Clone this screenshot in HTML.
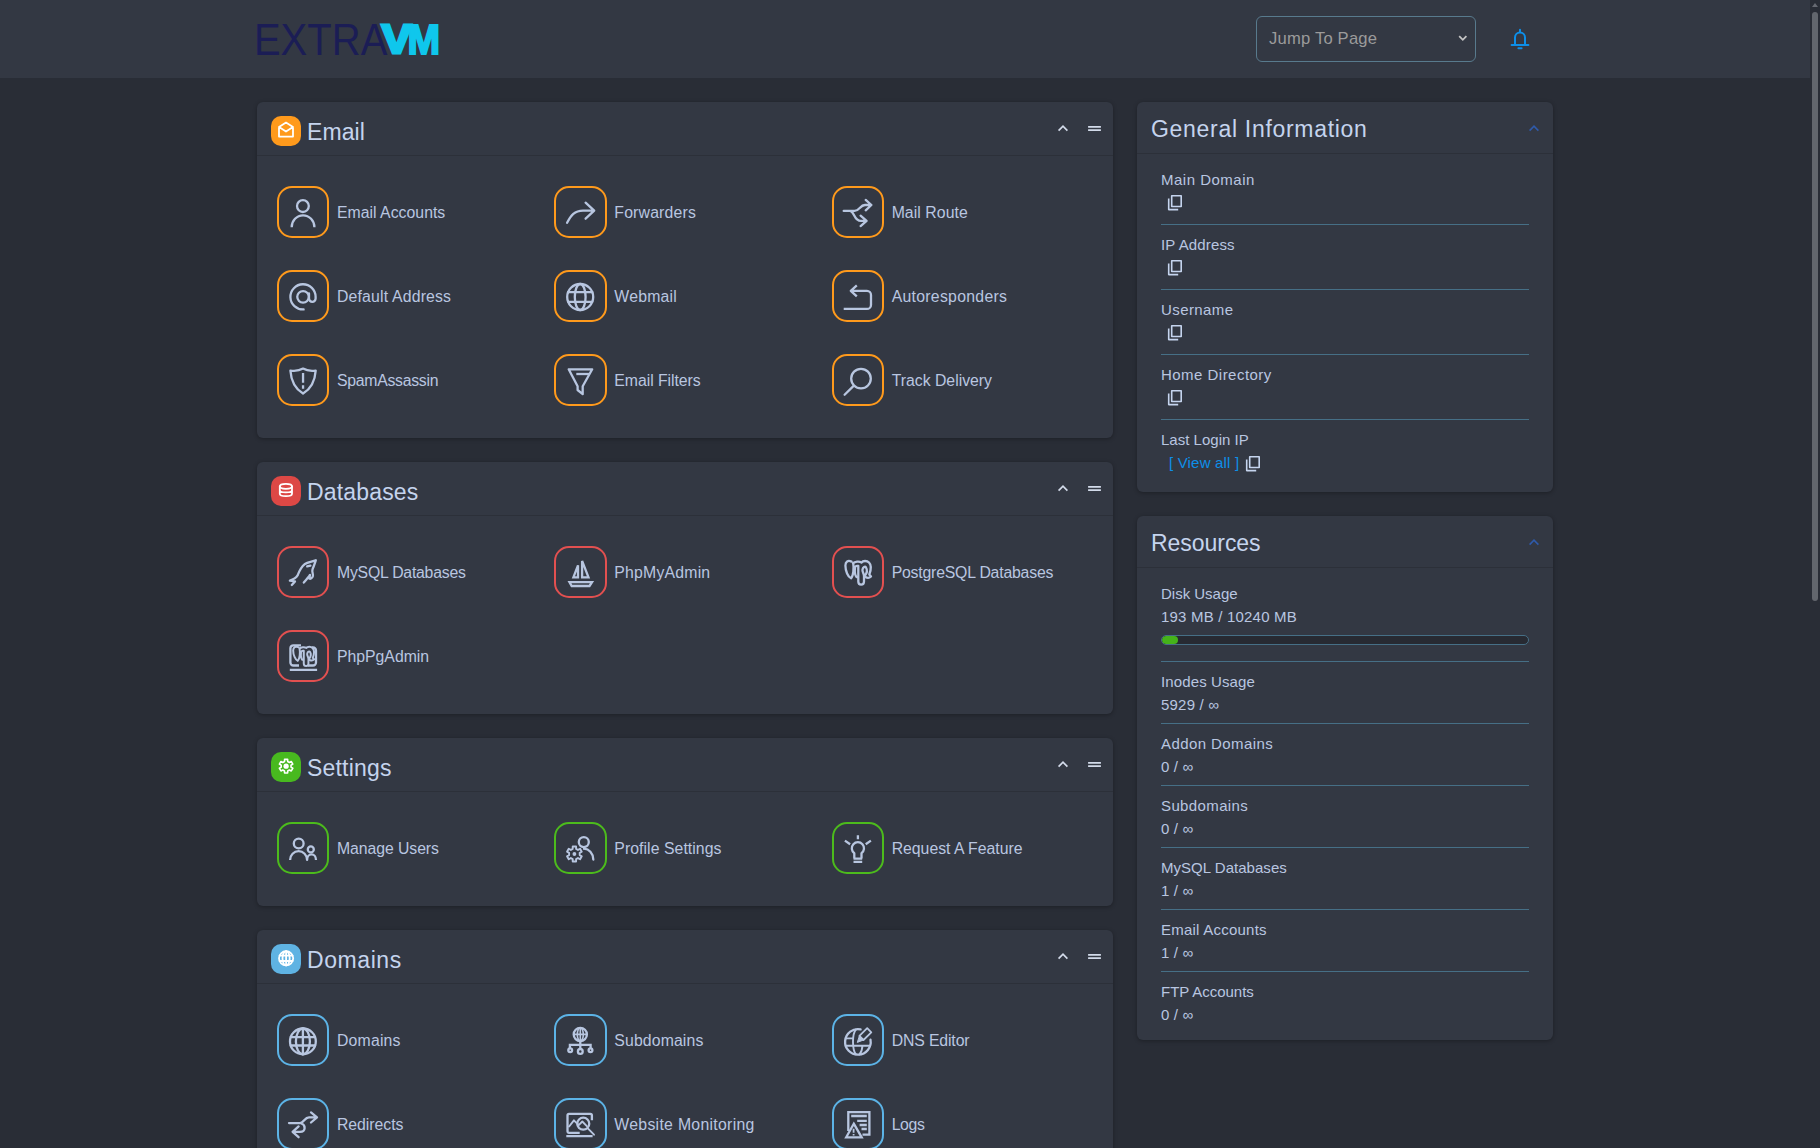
<!DOCTYPE html>
<html lang="en">
<head>
<meta charset="utf-8">
<title>ExtraVM</title>
<style>
*{box-sizing:border-box}
html,body{margin:0;padding:0}
html{overflow:hidden;background:#292d36}
body{width:1820px;height:1148px;overflow:hidden;background:#292d36;font-family:"Liberation Sans",sans-serif;color:#b9c6e0;position:relative}
svg{display:block;overflow:visible}
.top{position:absolute;left:0;top:0;width:1810px;height:78px;background:#333843}
.logo{position:absolute;left:254px;top:14px}
.jump{position:absolute;left:1256px;top:16px;width:220px;height:46px;border:1px solid #587a8d;border-radius:6px;color:#9b9b9b;font-size:16.6px;line-height:44px;padding-left:12px;white-space:nowrap}
.jump svg{position:absolute;left:201px;top:18px}
.bell{position:absolute;left:1510px;top:28px}
.sbar{position:absolute;left:1810px;top:0;width:10px;height:1148px;background:#292d36}
.sbar i{position:absolute;left:2px;top:12px;width:6px;height:588.7px;border-radius:3px;background:#62666d}
.sbar b{position:absolute;left:2px;top:2.8px;width:0;height:0;border-left:3px solid transparent;border-right:3px solid transparent;border-bottom:4.2px solid #666a72}
.card{position:absolute;background:#333843;border-radius:6px;box-shadow:0 1px 4px rgba(0,0,0,.3)}
.main{left:257px;width:856px}
.side{left:1137px;width:416px}
.hd{position:relative;height:54px;border-bottom:1px solid #2c3039}
.side .hd{height:52px}
.badge{position:absolute;left:14px;top:14px;width:30px;height:30px;border-radius:10px}
.badge svg{fill:none;stroke:#fff;stroke-width:1.8;stroke-linecap:round;stroke-linejoin:round}
.hd h2{position:absolute;left:50px;top:0;margin:0;font-weight:400;font-size:23px;line-height:60.1px;color:#c5d4ee;white-space:nowrap}
.side .hd h2{left:14px;line-height:55.9px}
.chev,.bars,.schev{position:absolute;fill:none;stroke:#d3dbea;stroke-width:1.7}
.chev{left:800px;top:22px}
.bars{left:830px;top:22px}
.schev{left:391px;top:22.3px;stroke:#2f5aaa;stroke-width:1.6}
.grid{padding:14px 12px 15px;display:flex;flex-wrap:wrap}
.it span{position:relative;top:.5px}
.it{width:277.33px;height:84px;display:flex;align-items:center;padding-left:8px;font-size:15.8px;white-space:nowrap}
.ib{width:52.4px;height:52.4px;border:2px solid #f90;border-radius:15px;margin-right:7.6px;flex:none;position:relative}
.ib svg{position:absolute;left:-1.9px;top:-1.8px;fill:none;stroke:#b8c6e0;stroke-width:2.3;stroke-linecap:round;stroke-linejoin:round}
.em .ib{border-color:#ff9a1c}
.db .ib{border-color:#e25050}
.st .ib{border-color:#4cbb1c}
.dm .ib{border-color:#5cb3e6}
.sb{padding:6px 24px 0}
.row{position:relative;font-size:15px;white-space:nowrap;border-bottom:1px solid #466f86}
.row.last{border-bottom:0}
.inf{height:65px}
.rs{height:62px}
.rs.disk{height:88px}
.lb{position:absolute;left:0;top:10.7px;line-height:18px}
.vl{position:absolute;left:0;top:33.8px;line-height:18px}
.inf .vl{left:6px;top:34.2px;display:flex;align-items:center}
.inf a{color:#0d8fe8;margin:0 6px 0 2px;position:relative;top:-.6px}
.copy{fill:none;stroke:#c5d4ee;stroke-width:1.6}
.pbar{position:absolute;left:0;top:61px;width:368px;height:10px;border:1px solid #466f86;border-radius:5px;background:#272a32;overflow:hidden}
.pbar i{display:block;width:16px;height:8px;border-radius:4px;background:#45b31a}
</style>
</head>
<body>
<div class="top">
 <svg class="logo" width="190" height="50" viewBox="0 0 190 50"><text font-family="Liberation Sans, sans-serif"><tspan x="-0.1" y="40.7" font-size="44.7" fill="#1b1d55" textLength="133.5" lengthAdjust="spacingAndGlyphs">EXTRA</tspan><tspan x="127.8" y="39.4" font-weight="700" fill="#0fc7ec" stroke="#0fc7ec" font-size="40.5" stroke-width="3" textLength="29.6" lengthAdjust="spacingAndGlyphs">V</tspan><tspan x="153.6" y="39.9" font-weight="700" fill="#0fc7ec" stroke="#0fc7ec" font-size="41.9" stroke-width="2" textLength="32.6" lengthAdjust="spacingAndGlyphs">M</tspan></text></svg>
 <div class="jump" style="letter-spacing:0.20px">Jump To Page<svg width="10" height="8" viewBox="0 0 10 8"><path d="M1.2 1.2l3.6 3.6 3.6-3.6" fill="none" stroke="#c4c4c4" stroke-width="1.8"/></svg></div>
 <svg class="bell" width="20" height="22" viewBox="0 0 20 22"><path d="M1.6 17.1h16.8M5 17.1V9.4a5 5 0 0 1 10 0V17.1M10 1.7V4.4M8.4 20.2h3.2" fill="none" stroke="#0d8fe8" stroke-width="2" stroke-linecap="round"/></svg>
</div>
<div class="sbar"><b></b><i></i></div>
<div class="card main em" style="top:102px;height:336px">
 <div class="hd"><div class="badge" style="background:#ff9a1c"><svg width="30" height="30" viewBox="0 0 30 30"><path d="M8 11L15 6.6L22 11V20.6H8ZM8 11L15 15.6L22 11" /></svg></div><h2 style="letter-spacing:0.11px">Email</h2><svg class="chev" width="12" height="8" viewBox="0 0 12 8"><path d="M1.6 6.6L6 2.2L10.4 6.6"/></svg><svg class="bars" width="14" height="8" viewBox="0 0 14 8"><path d="M1.1 2.9H13.9M1.1 6.2H13.9"/></svg></div>
 <div class="grid">
  <div class="it"><div class="ib"><svg width="52" height="52" viewBox="0 0 52 52"><circle cx="25.9" cy="20.1" r="5.9"/><path d="M14.7 41.2A11.35 11.9 0 0 1 37.4 41.2" stroke-linecap="butt"/></svg></div><span style="letter-spacing:0.02px">Email Accounts</span></div>
  <div class="it"><div class="ib"><svg width="52" height="52" viewBox="0 0 52 52"><path d="M13.1 36.8C17 29.5 20.5 24.6 29 24.6H40.2M31.6 16.7L40.2 24.6L31.6 32.7"/></svg></div><span style="letter-spacing:0.18px">Forwarders</span></div>
  <div class="it"><div class="ib"><svg width="52" height="52" viewBox="0 0 52 52"><path d="M11.7 24.9H22.5C27.5 24.9 28 19 33 19H39.3M33.7 13.9L39.4 19L33.7 24.3M18.8 25.1C23 27 22 34.9 29 34.9H34.5M28.6 29.7L34.6 34.9L28.6 40.1"/></svg></div><span style="letter-spacing:0.07px">Mail Route</span></div>
  <div class="it"><div class="ib"><svg width="52" height="52" viewBox="0 0 52 52"><circle cx="26.05" cy="26.85" r="5.8"/><path d="M32 23.5V28.6a3.3 3.3 0 0 0 6.6 0V26.85A12.6 12.6 0 1 0 26.6 39.45"/></svg></div><span style="letter-spacing:0.18px">Default Address</span></div>
  <div class="it"><div class="ib"><svg width="52" height="52" viewBox="0 0 52 52"><circle cx="26.2" cy="27" r="13"/><ellipse cx="26.2" cy="27" rx="5.4" ry="13"/><path d="M14.1 22.1H38.3M14.1 31.8H38.3"/></svg></div><span style="letter-spacing:0.21px">Webmail</span></div>
  <div class="it"><div class="ib"><svg width="52" height="52" viewBox="0 0 52 52"><path d="M11.7 38.9H35a4 4 0 0 0 4-4V24.9a4 4 0 0 0-4-4H18.9M24.8 15.4L18.8 20.9L24.8 26.4" stroke-linecap="butt"/></svg></div><span style="letter-spacing:0.29px">Autoresponders</span></div>
  <div class="it"><div class="ib"><svg width="52" height="52" viewBox="0 0 52 52"><path d="M13.4 16.6Q21 17.6 26.05 14.6Q31.1 17.6 38.7 16.6C38 27 33.5 35 26.05 39.6C18.6 35 14.1 27 13.4 16.6Z"/><path d="M26.05 19V28.7M26.05 31.2V34.7" stroke-linecap="butt"/></svg></div><span style="letter-spacing:-0.27px">SpamAssassin</span></div>
  <div class="it"><div class="ib"><svg width="52" height="52" viewBox="0 0 52 52"><path d="M14.7 15.3H38.2L28.7 32.3V40.2L23.6 36V32.3Z"/><path d="M22.3 20H35" stroke-linecap="butt"/></svg></div><span style="letter-spacing:-0.04px">Email Filters</span></div>
  <div class="it"><div class="ib"><svg width="52" height="52" viewBox="0 0 52 52"><circle cx="29" cy="24.6" r="9.8"/><path d="M21.6 31.9L12.6 40.7"/></svg></div><span style="letter-spacing:0.00px">Track Delivery</span></div>
 </div>
</div>
<div class="card main db" style="top:462px;height:252px">
 <div class="hd"><div class="badge" style="background:#dd4845"><svg width="30" height="30" viewBox="0 0 30 30"><ellipse cx="14.9" cy="10.3" rx="6.1" ry="2.5"/><path d="M8.8 10.3V17.8C8.8 21 21 21 21 17.8V10.3M8.8 14C8.8 17.2 21 17.2 21 14"/></svg></div><h2 style="letter-spacing:0.16px">Databases</h2><svg class="chev" width="12" height="8" viewBox="0 0 12 8"><path d="M1.6 6.6L6 2.2L10.4 6.6"/></svg><svg class="bars" width="14" height="8" viewBox="0 0 14 8"><path d="M1.1 2.9H13.9M1.1 6.2H13.9"/></svg></div>
 <div class="grid">
  <div class="it"><div class="ib"><svg width="52" height="52" viewBox="0 0 52 52"><path d="M12.9 34.6C16 33.6 19 32 20.6 29.4C22 26 23.5 21.5 27.5 18.3C31 16 35.5 15.8 38.8 14.3C38 17.5 36.5 20.5 35.5 23.5C34.5 26.5 36.8 28.5 35.8 30.5C35 32 33.5 33.2 32.4 32.6L33 28.8C31.5 31 29 34 26.8 36.6M12.9 34.6L18 35.4L14.8 39M30.2 20.4L33.4 19.6"/></svg></div><span style="letter-spacing:-0.22px">MySQL Databases</span></div>
  <div class="it"><div class="ib"><svg width="52" height="52" viewBox="0 0 52 52"><path d="M15.5 36.2H38L35.5 40H17.7ZM28.1 14.9L34.5 31.3H28.1ZM24 19.3V31.3H19.4Z" stroke-linejoin="miter"/></svg></div><span style="letter-spacing:0.21px">PhpMyAdmin</span></div>
  <div class="it"><div class="ib"><svg width="52" height="52" viewBox="0 0 52 52"><path d="M19.5 15.6C16 14 13.4 15.5 13.4 19.5C13.4 25 16 31 19 32.3C21.5 30 22 22 21.2 17M21 17.5C23 15.5 27 15 29.5 16.5C31 14.5 35 14.5 37 16.5C39.5 19 39 24 37.3 28.5L39 30.5C37.5 32 35 32 33.5 31M26.3 20V35.5C26.3 39.6 32 39.6 32 35.5V30C32 27 30 26 30.5 23.5C31 21 33 20 34 21.5C35.5 24 34.5 27.5 33 29.5M26.3 20C25 19.5 23.5 20 23 21.5C22.5 26 22.8 29 24.5 31"/></svg></div><span style="letter-spacing:-0.19px">PostgreSQL Databases</span></div>
  <div class="it"><div class="ib"><svg width="52" height="52" viewBox="0 0 52 52"><path d="M24 15.3H16.4a3 3 0 0 0-3 3V32.5a3 3 0 0 0 3 3H22M35 17.5h1a3 3 0 0 1 3 3V32.5a3 3 0 0 1-3 3H31M12.8 39.9H40.1" stroke-linecap="butt"/><g transform="translate(5.2 4.4) scale(.82)" stroke-width="2.4"><path d="M19.5 15.6C16 14 13.4 15.5 13.4 19.5C13.4 25 16 31 19 32.3C21.5 30 22 22 21.2 17M21 17.5C23 15.5 27 15 29.5 16.5C31 14.5 35 14.5 37 16.5C39.5 19 39 24 37.3 28.5L39 30.5C37.5 32 35 32 33.5 31M26.3 20V35.5C26.3 39.6 32 39.6 32 35.5V30C32 27 30 26 30.5 23.5C31 21 33 20 34 21.5C35.5 24 34.5 27.5 33 29.5M26.3 20C25 19.5 23.5 20 23 21.5C22.5 26 22.8 29 24.5 31"/></g></svg></div><span style="letter-spacing:-0.01px">PhpPgAdmin</span></div>
 </div>
</div>
<div class="card main st" style="top:738px;height:168px">
 <div class="hd"><div class="badge" style="background:#48b91f"><svg width="30" height="30" viewBox="0 0 30 30"><path d="M13.51 9.46 L13.57 7.37 L16.63 7.37 L16.69 9.46 L18.41 10.45 L20.25 9.46 L21.78 12.11 L20.00 13.21 L20.00 15.19 L21.78 16.29 L20.25 18.94 L18.41 17.95 L16.69 18.94 L16.63 21.03 L13.57 21.03 L13.51 18.94 L11.79 17.95 L9.95 18.94 L8.42 16.29 L10.20 15.19 L10.20 13.21 L8.42 12.11 L9.95 9.46 L11.79 10.45Z" stroke-width="1.6"/><circle cx="15.1" cy="14.2" r="2.6" fill="#fff" stroke="none"/></svg></div><h2 style="letter-spacing:0.20px">Settings</h2><svg class="chev" width="12" height="8" viewBox="0 0 12 8"><path d="M1.6 6.6L6 2.2L10.4 6.6"/></svg><svg class="bars" width="14" height="8" viewBox="0 0 14 8"><path d="M1.1 2.9H13.9M1.1 6.2H13.9"/></svg></div>
 <div class="grid">
  <div class="it"><div class="ib"><svg width="52" height="52" viewBox="0 0 52 52"><circle cx="21.7" cy="21.5" r="4.9"/><circle cx="33.8" cy="27.4" r="3" stroke-width="2.3"/><path d="M13.1 37.9A8.5 8.7 0 0 1 30.1 37.9A4.45 5.6 0 0 1 39 37.9" stroke-linecap="butt"/></svg></div><span style="letter-spacing:-0.07px">Manage Users</span></div>
  <div class="it"><div class="ib"><svg width="52" height="52" viewBox="0 0 52 52"><circle cx="29.8" cy="20.1" r="5"/><path d="M30 26.7C35 27 39 31 39.3 37.5"/><path d="M18.68 26.88 L18.72 24.49 L22.08 24.49 L22.12 26.88 L23.97 27.95 L26.07 26.79 L27.75 29.70 L25.69 30.93 L25.69 33.07 L27.75 34.30 L26.07 37.21 L23.97 36.05 L22.12 37.12 L22.08 39.51 L18.72 39.51 L18.68 37.12 L16.83 36.05 L14.73 37.21 L13.05 34.30 L15.11 33.07 L15.11 30.93 L13.05 29.70 L14.73 26.79 L16.83 27.95Z" stroke-width="1.9"/><circle cx="20.4" cy="32" r="1.9" fill="#b8c6e0" stroke="none"/></svg></div><span style="letter-spacing:0.06px">Profile Settings</span></div>
  <div class="it"><div class="ib"><svg width="52" height="52" viewBox="0 0 52 52"><path d="M22.3 36.5V31.2A6.1 6.1 0 1 1 29.5 31.2V36.5M21.5 36.7H30.2M21.5 39.8H30.2M25.9 13.2V17.3M12.9 18.6L18.1 22.2M38.9 18.6L33.7 22.2" stroke-linecap="butt"/></svg></div><span style="letter-spacing:-0.00px">Request A Feature</span></div>
 </div>
</div>
<div class="card main dm" style="top:930px;height:260px">
 <div class="hd"><div class="badge" style="background:#5fb3e3"><svg width="30" height="30" viewBox="0 0 30 30"><circle cx="15.1" cy="14.3" r="7.1"/><ellipse cx="15.1" cy="14.3" rx="3.6" ry="7.1"/><path d="M15.1 7.2V21.4M8.6 11.6H21.6M8.6 17H21.6"/></svg></div><h2 style="letter-spacing:0.58px">Domains</h2><svg class="chev" width="12" height="8" viewBox="0 0 12 8"><path d="M1.6 6.6L6 2.2L10.4 6.6"/></svg><svg class="bars" width="14" height="8" viewBox="0 0 14 8"><path d="M1.1 2.9H13.9M1.1 6.2H13.9"/></svg></div>
 <div class="grid">
  <div class="it"><div class="ib"><svg width="52" height="52" viewBox="0 0 52 52"><circle cx="25.9" cy="27.4" r="12.9"/><ellipse cx="25.9" cy="27.4" rx="7" ry="12.9"/><path d="M25.9 14.5V40.3M13.7 23.1H38.1M13.7 31.5H38.1"/></svg></div><span style="letter-spacing:0.19px">Domains</span></div>
  <div class="it"><div class="ib"><svg width="52" height="52" viewBox="0 0 52 52"><circle cx="26.3" cy="20.4" r="6.6"/><ellipse cx="26.3" cy="20.4" rx="3" ry="6.6" stroke-width="1.6"/><path d="M26.3 13.8V27M19.7 20.4H32.9" stroke-width="1.6"/><path d="M26.3 27V34.6M15.9 34V30.9H36.6V34" stroke-linecap="butt" stroke-linejoin="miter"/><circle cx="16.2" cy="36.3" r="1.9"/><circle cx="36.5" cy="36.3" r="1.9"/><circle cx="26.3" cy="37.4" r="2.4"/></svg></div><span style="letter-spacing:0.13px">Subdomains</span></div>
  <div class="it"><div class="ib"><svg width="52" height="52" viewBox="0 0 52 52"><path d="M38.5 25.7A12.8 12.8 0 1 1 28.6 15.4"/><path d="M24 15.4C20 20 20 36 24 40.4M27.5 40.4C29.5 38 30.3 35 30.4 31.7M13.6 31.7H38.2M13.8 24.4H20.8" stroke-width="1.9"/><path d="M35.2 14.2L39.3 18.3L31.5 26L27.4 21.9Z" stroke-width="1.8"/><path d="M27.4 21.9L25.3 28.4L31.5 26Z" fill="#b8c6e0" stroke-width="1"/></svg></div><span style="letter-spacing:-0.12px">DNS Editor</span></div>
  <div class="it"><div class="ib"><svg width="52" height="52" viewBox="0 0 52 52"><path d="M12 25.1H23C27 25.1 27.5 19.3 32 19.3H39.8M34 14.4L40 19.3L34 24.5M24.5 25.5C28.6 27 29.2 33.8 23 33.8H15.8M21.6 28.4L15.6 33.8L21.6 39.2"/></svg></div><span style="letter-spacing:-0.04px">Redirects</span></div>
  <div class="it"><div class="ib"><svg width="52" height="52" viewBox="0 0 52 52"><path d="M25.7 34.8H15a1.5 1.5 0 0 1-1.5-1.5V17.4a1.5 1.5 0 0 1 1.5-1.5H36.4a1.5 1.5 0 0 1 1.5 1.5V22.3M12.3 38.1H38.6" stroke-linecap="butt"/><circle cx="29.25" cy="25.7" r="6"/><path d="M33.6 30.1L40 36.7M15.1 28.5L19.9 22.3L24.7 27.1L28.3 23.5L32.8 28.1" stroke-width="1.9"/></svg></div><span style="letter-spacing:0.30px">Website Monitoring</span></div>
  <div class="it"><div class="ib"><svg width="52" height="52" viewBox="0 0 52 52"><path d="M16.3 33V14.2H37.4V36.7H30.5" stroke-linejoin="miter" stroke-linecap="butt"/><path d="M19.2 18H34.8M25.2 22.8H34.8M27.6 27H34.8M29.5 31H34.8" stroke-linecap="butt"/><path d="M21.8 25.7L29.7 39.3H14.2Z" stroke-linejoin="miter"/><path d="M21.6 30.7V34.8M21.6 36V37.6" stroke-linecap="butt" stroke-width="1.8"/></svg></div><span style="letter-spacing:-0.34px">Logs</span></div>
 </div>
</div>
<div class="card side" style="top:102px;height:390px">
 <div class="hd"><h2 style="letter-spacing:0.70px">General Information</h2><svg class="schev" width="12" height="8" viewBox="0 0 12 8"><path d="M1.6 6.6L6 2.2L10.4 6.6"/></svg></div>
 <div class="sb">
  <div class="row inf"><div class="lb" style="letter-spacing:0.50px">Main Domain</div><div class="vl"><svg class="copy" width="16" height="17" viewBox="0 0 16 17"><path d="M4.7 12.5V1.7H14.2V12.5ZM1.7 4.5V15.6H11.2" stroke-linejoin="round"/></svg></div></div>
  <div class="row inf"><div class="lb" style="letter-spacing:0.15px">IP Address</div><div class="vl"><svg class="copy" width="16" height="17" viewBox="0 0 16 17"><path d="M4.7 12.5V1.7H14.2V12.5ZM1.7 4.5V15.6H11.2" stroke-linejoin="round"/></svg></div></div>
  <div class="row inf"><div class="lb" style="letter-spacing:0.41px">Username</div><div class="vl"><svg class="copy" width="16" height="17" viewBox="0 0 16 17"><path d="M4.7 12.5V1.7H14.2V12.5ZM1.7 4.5V15.6H11.2" stroke-linejoin="round"/></svg></div></div>
  <div class="row inf"><div class="lb" style="letter-spacing:0.47px">Home Directory</div><div class="vl"><svg class="copy" width="16" height="17" viewBox="0 0 16 17"><path d="M4.7 12.5V1.7H14.2V12.5ZM1.7 4.5V15.6H11.2" stroke-linejoin="round"/></svg></div></div>
  <div class="row inf last"><div class="lb" style="letter-spacing:0.01px">Last Login IP</div><div class="vl"><a style="letter-spacing:0.18px">[ View all ]</a><svg class="copy" width="16" height="17" viewBox="0 0 16 17"><path d="M4.7 12.5V1.7H14.2V12.5ZM1.7 4.5V15.6H11.2" stroke-linejoin="round"/></svg></div></div>
 </div>
</div>
<div class="card side" style="top:516px;height:524px">
 <div class="hd"><h2 style="letter-spacing:-0.04px">Resources</h2><svg class="schev" width="12" height="8" viewBox="0 0 12 8"><path d="M1.6 6.6L6 2.2L10.4 6.6"/></svg></div>
 <div class="sb">
  <div class="row rs disk"><div class="lb" style="letter-spacing:-0.01px">Disk Usage</div><div class="vl" style="letter-spacing:0.20px">193 MB / 10240 MB</div><div class="pbar"><i></i></div></div>
  <div class="row rs"><div class="lb" style="letter-spacing:0.12px">Inodes Usage</div><div class="vl" style="letter-spacing:0.20px">5929 / ∞</div></div>
  <div class="row rs"><div class="lb" style="letter-spacing:0.42px">Addon Domains</div><div class="vl" style="letter-spacing:0.18px">0 / ∞</div></div>
  <div class="row rs"><div class="lb" style="letter-spacing:0.38px">Subdomains</div><div class="vl" style="letter-spacing:0.18px">0 / ∞</div></div>
  <div class="row rs"><div class="lb" style="letter-spacing:0.03px">MySQL Databases</div><div class="vl" style="letter-spacing:0.18px">1 / ∞</div></div>
  <div class="row rs"><div class="lb" style="letter-spacing:0.23px">Email Accounts</div><div class="vl" style="letter-spacing:0.18px">1 / ∞</div></div>
  <div class="row rs last"><div class="lb" style="letter-spacing:-0.03px">FTP Accounts</div><div class="vl" style="letter-spacing:0.18px">0 / ∞</div></div>
 </div>
</div>
</body>
</html>
